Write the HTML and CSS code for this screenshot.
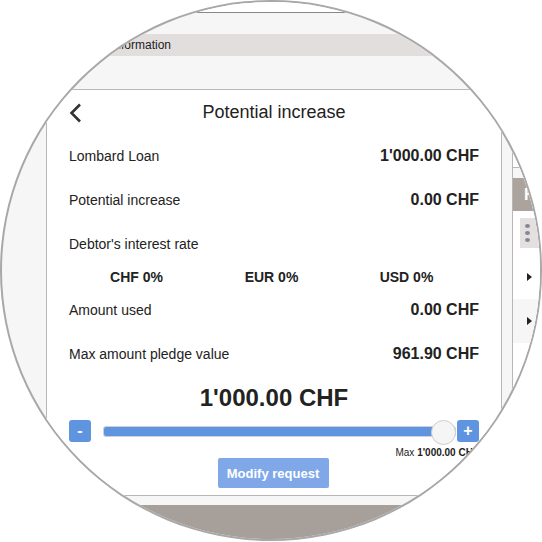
FILE: index.html
```html
<!DOCTYPE html>
<html>
<head>
    <title>Potential increase</title>
    <meta charset="UTF-8">
    <link rel="stylesheet" href="styles.css">
</head>
<body>
    <div class="circle">
        <div class="top-bar"></div>
        <div class="info-area">
            <div class="info-band">Information</div>
        </div>
        <main>
            <div class="modal">
                <div class="modal-header">
                    <svg class="back-icon" width="13" height="20" viewBox="0 0 13 20"><path d="M11 1.5L2.5 10L11 18.5" fill="none" stroke="#333" stroke-width="2.6"/></svg>
                    <span class="modal-title">Potential increase</span>
                </div>
                <div class="row"><span>Lombard Loan</span><span class="value">1'000.00 CHF</span></div>
                <div class="row"><span>Potential increase</span><span class="value">0.00 CHF</span></div>
                <div class="row"><span>Debtor's interest rate</span></div>
                <div class="rates">
                    <span>CHF 0%</span>
                    <span>EUR 0%</span>
                    <span>USD 0%</span>
                </div>
                <div class="row"><span>Amount used</span><span class="value">0.00 CHF</span></div>
                <div class="row"><span>Max amount pledge value</span><span class="value">961.90 CHF</span></div>
                <div class="amount">1'000.00 CHF</div>
                <div class="slider">
                    <div class="step-button">-</div>
                    <div class="track"><div class="thumb"></div></div>
                    <div class="step-button">+</div>
                </div>
                <div class="max-note">Max <b>1'000.00 CHF</b></div>
                <div class="submit-row"><button type="button" class="submit-button">Modify request</button></div>
            </div>
            <div class="side-panel">
                <div class="side-top"></div>
                <div class="side-gap"></div>
                <div class="side-header">H</div>
                <div class="side-tools">
                    <div class="tool-box"><i></i><i></i><i></i></div>
                </div>
                <div class="side-row"><span class="arrow"></span></div>
                <div class="side-row side-row-grey"><span class="arrow"></span></div>
            </div>
        </main>
        <div class="footer-gap"></div>
        <div class="footer"></div>
    </div>
</body>
</html>
```

FILE: styles.css
```css
html {
    font-family: "Liberation Sans", Arial, sans-serif;
}

body {
    margin: 0;
    width: 542px;
    height: 542px;
    background-color: white;
    color: #222;
    overflow: hidden;
}

.circle {
    box-sizing: border-box;
    width: 542px;
    height: 541px;
    border: 2px solid #a8a8a8;
    border-radius: 50%;
    overflow: hidden;
    display: flex;
    flex-direction: column;
    background-color: #f6f6f6;
}

.top-bar {
    height: 10px;
    flex: none;
    background-color: white;
    border-bottom: 1px solid #888;
}

.info-area {
    height: 77px;
    flex: none;
    padding-top: 21px;
    box-sizing: border-box;
    border-bottom: 1px solid #bbb6b4;
}

.info-band {
    height: 22px;
    line-height: 22px;
    padding-left: 109px;
    font-size: 12px;
    background-color: #e2dedd;
}

main {
    height: 406px;
    flex: none;
    display: flex;
    padding-left: 44px;
}

.modal {
    width: 456px;
    flex: none;
    box-sizing: border-box;
    padding: 0 22px;
    background-color: white;
    border-left: 1px solid #bbb6b4;
    border-right: 1px solid #bbb6b4;
    border-bottom: 1px solid #bbb6b4;
}

.modal-header {
    height: 44px;
    display: flex;
    align-items: center;
    justify-content: center;
    position: relative;
}

.back-icon {
    position: absolute;
    left: 0;
    top: 13px;
}

.modal-title {
    font-size: 18px;
}

.row {
    height: 44px;
    display: flex;
    align-items: center;
    justify-content: space-between;
    font-size: 14px;
}

.value {
    font-size: 16px;
    font-weight: bold;
}

.rates {
    height: 22px;
    display: grid;
    grid-template-columns: repeat(3, 1fr);
    align-items: center;
    text-align: center;
    padding-right: 5px;
    font-size: 14px;
    font-weight: bold;
}

.amount {
    height: 44px;
    line-height: 44px;
    text-align: center;
    font-size: 24px;
    font-weight: bold;
}

.slider {
    display: flex;
    align-items: center;
}

.step-button {
    width: 22px;
    height: 22px;
    flex: none;
    line-height: 21px;
    text-align: center;
    color: white;
    font-size: 16px;
    font-weight: bold;
    border-radius: 3px;
    background-color: #5f95e0;
}

.track {
    flex: 1;
    height: 11px;
    margin: 0 1px 0 12px;
    box-sizing: border-box;
    position: relative;
    border: 1px solid #d0d0d0;
    border-radius: 3px;
    background-color: #5f95e0;
}

.thumb {
    position: absolute;
    right: -1px;
    top: -7px;
    width: 23px;
    height: 23px;
    border: 1px solid #ccc;
    border-radius: 50%;
    background-color: #f5f5f5;
}

.max-note {
    height: 16px;
    line-height: 22px;
    text-align: right;
    font-size: 10px;
}

.submit-row {
    text-align: center;
    padding-right: 2px;
}

.submit-button {
    width: 111px;
    height: 30px;
    padding: 0;
    border: 0;
    border-radius: 2px;
    font-family: inherit;
    font-size: 13px;
    font-weight: bold;
    color: white;
    background-color: #80a8e8;
}

.side-panel {
    margin-left: 10px;
    flex: 1;
    background-color: white;
    border-left: 1px solid #bbb6b4;
}

.side-top {
    height: 77px;
    border-bottom: 1px solid #bbb6b4;
}

.side-gap {
    height: 10px;
    background-color: #f6f6f6;
}

.side-header {
    height: 33px;
    line-height: 33px;
    padding-left: 11px;
    color: white;
    font-size: 16px;
    font-weight: bold;
    background-color: #aba39e;
}

.side-tools {
    height: 44px;
    padding: 7px 0 0 7px;
    box-sizing: border-box;
}

.tool-box {
    height: 30px;
    display: flex;
    flex-direction: column;
    justify-content: center;
    gap: 3px;
    padding-left: 5px;
    background-color: #e3e0df;
}

.tool-box i {
    width: 5px;
    height: 4px;
    border-radius: 50%;
    background-color: #868694;
}

.side-row {
    height: 44px;
    display: flex;
    align-items: center;
    padding-left: 14px;
}

.side-row-grey {
    background-color: #f6f6f6;
}

.arrow {
    width: 0;
    height: 0;
    border-left: 5px solid #222;
    border-top: 4.5px solid transparent;
    border-bottom: 4.5px solid transparent;
}

.footer-gap {
    height: 9px;
    flex: none;
}

.footer {
    flex: 1;
    background-color: #a79f9a;
}
```
